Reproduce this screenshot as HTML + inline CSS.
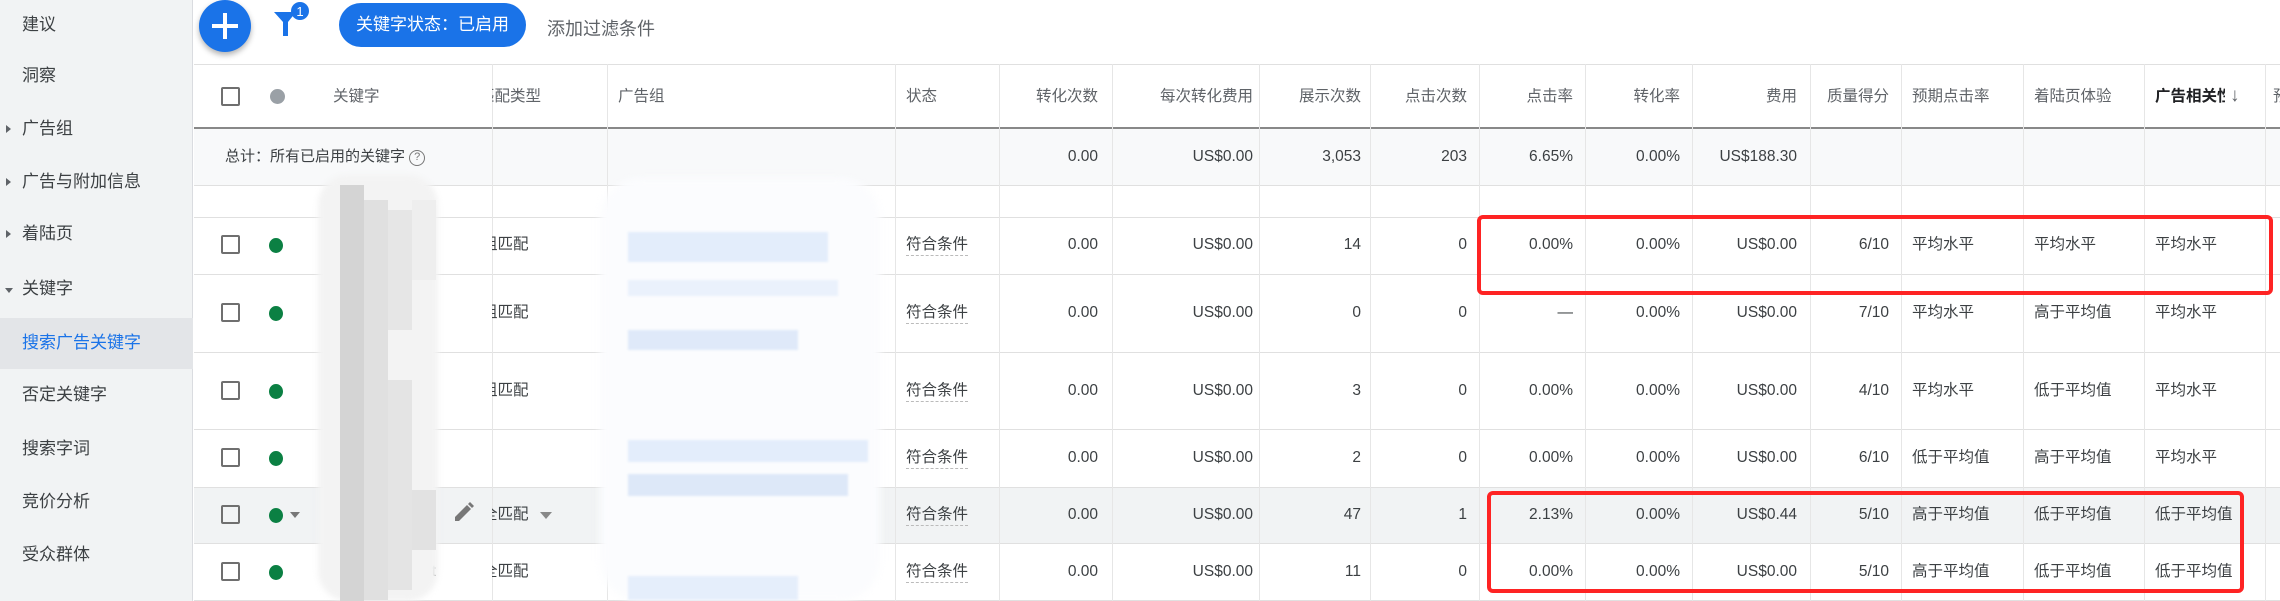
<!DOCTYPE html>
<html><head><meta charset="utf-8"><style>
*{margin:0;padding:0;box-sizing:border-box}
body{width:2280px;height:601px;overflow:hidden;background:#fff;font-family:"Liberation Sans","Noto Sans CJK SC",sans-serif;color:#3c4043;position:relative;font-size:15.5px}
.a{position:absolute;white-space:nowrap}
.side{position:absolute;left:0;top:0;width:193px;height:601px;background:#f1f3f4;border-right:1px solid #dadce0}
.si{position:absolute;left:22px;font-size:17px;color:#3c4043;line-height:20px;white-space:nowrap}
.tri{position:absolute;left:6px;width:0;height:0;border-top:4px solid transparent;border-bottom:4px solid transparent;border-left:5px solid #5f6368}
.trid{position:absolute;left:5px;width:0;height:0;border-left:4px solid transparent;border-right:4px solid transparent;border-top:5px solid #5f6368}
.hl{position:absolute;left:194px;right:0;height:1px;background:#e0e0e0}
.vl{position:absolute;width:1px;background:#e6e6e6;top:64px;height:537px}
.r{position:absolute;text-align:right;width:120px;line-height:20px;white-space:nowrap}
.l{position:absolute;line-height:20px;white-space:nowrap}
.hd{color:#5f6368}
.cb{position:absolute;left:221px;width:19px;height:19px;border:2px solid #6f6f6f;border-radius:2px}
.dot{position:absolute;left:269px;width:14px;height:15px;border-radius:50%;background:#0b8043}
.st{border-bottom:1px dashed #bbb}
.red{position:absolute;border:4px solid #fe2323;border-radius:6px}
.px{position:absolute;width:24px;height:24px}
</style></head><body>
<div class="side">
<div class="si" style="top:15px">建议</div>
<div class="si" style="top:66px">洞察</div>
<div class="tri" style="top:125px"></div><div class="si" style="top:119px">广告组</div>
<div class="tri" style="top:178px"></div><div class="si" style="top:172px">广告与附加信息</div>
<div class="tri" style="top:230px"></div><div class="si" style="top:224px">着陆页</div>
<div class="trid" style="top:288px"></div><div class="si" style="top:279px">关键字</div>
<div style="position:absolute;left:0;top:318px;width:193px;height:51px;background:#e3e5e8"></div>
<div class="si" style="top:333px;color:#1a73e8">搜索广告关键字</div>
<div class="si" style="top:385px">否定关键字</div>
<div class="si" style="top:439px">搜索字词</div>
<div class="si" style="top:492px">竞价分析</div>
<div class="si" style="top:545px">受众群体</div>
</div>
<!-- top bar -->
<div class="a" style="left:199px;top:0;width:52px;height:52px;border-radius:50%;background:#1a73e8;box-shadow:0 3px 6px rgba(0,0,0,.3)"></div>
<div class="a" style="left:212px;top:24px;width:26px;height:4px;background:#fff"></div>
<div class="a" style="left:223px;top:13px;width:4px;height:26px;background:#fff"></div>
<svg class="a" style="left:272px;top:2px" width="40" height="36"><path d="M2 10 H24 L16 20 V34 H11 V20 Z" fill="#1a73e8"/><circle cx="28" cy="9" r="9" fill="#1a73e8"/><text x="28" y="14" font-size="13" fill="#fff" text-anchor="middle" font-family="Liberation Sans">1</text></svg>
<div class="a" style="left:339px;top:3px;width:187px;height:44px;border-radius:22px;background:#1a73e8;color:#fff;font-size:17px;line-height:44px;text-align:center">关键字状态：已启用</div>
<div class="a" style="left:547px;top:15px;font-size:18px;color:#5f6368">添加过滤条件</div>
<div class="hl" style="top:64px"></div>
<!-- table backgrounds -->
<div class="a" style="left:194px;top:129px;right:0;height:56px;background:#f8f9fa"></div>
<div class="a" style="left:194px;top:487px;right:0;height:56px;background:#f1f3f4"></div>
<div class="a" style="left:194px;top:127px;right:0;height:2px;background:#888"></div>
<div class="hl" style="top:185px"></div><div class="hl" style="top:217px"></div><div class="hl" style="top:274px"></div><div class="hl" style="top:352px"></div><div class="hl" style="top:429px"></div><div class="hl" style="top:487px"></div><div class="hl" style="top:543px"></div><div class="hl" style="top:600px"></div>
<div class="vl" style="left:492px"></div><div class="vl" style="left:607px"></div><div class="vl" style="left:895px"></div><div class="vl" style="left:999px"></div><div class="vl" style="left:1112px"></div><div class="vl" style="left:1259px"></div><div class="vl" style="left:1370px"></div><div class="vl" style="left:1479px"></div><div class="vl" style="left:1585px"></div><div class="vl" style="left:1692px"></div><div class="vl" style="left:1810px"></div><div class="vl" style="left:1901px"></div><div class="vl" style="left:2023px"></div><div class="vl" style="left:2144px"></div><div class="vl" style="left:2265px"></div>
<!-- header -->
<div class="cb" style="top:87px"></div>
<div class="a" style="left:270px;top:89px;width:15px;height:15px;border-radius:50%;background:#9aa0a6"></div>
<div class="l hd" style="left:333px;top:87px">关键字</div>
<div class="l hd" style="left:492px;top:87px;width:110px;overflow:hidden"><span style="margin-left:-13px">匹配类型</span></div>
<div class="l hd" style="left:618px;top:87px">广告组</div>
<div class="l hd" style="left:906px;top:87px">状态</div>
<div class="r hd" style="left:978px;top:87px">转化次数</div>
<div class="r hd" style="left:1133px;top:87px">每次转化费用</div>
<div class="r hd" style="left:1241px;top:87px">展示次数</div>
<div class="r hd" style="left:1347px;top:87px">点击次数</div>
<div class="r hd" style="left:1453px;top:87px">点击率</div>
<div class="r hd" style="left:1560px;top:87px">转化率</div>
<div class="r hd" style="left:1677px;top:87px">费用</div>
<div class="r hd" style="left:1769px;top:87px">质量得分</div>
<div class="l hd" style="left:1912px;top:87px">预期点击率</div>
<div class="l hd" style="left:2034px;top:87px">着陆页体验</div>
<div class="l" style="left:2155px;top:87px;width:70px;overflow:hidden;color:#202124;font-weight:bold">广告相关性</div>
<div class="l hd" style="left:2230px;top:86px;font-size:19px">↓</div>
<div class="l hd" style="left:2273px;top:87px">预</div>
<!-- total -->
<div class="l" style="left:225px;top:147px;font-size:15px">总计：所有已启用的关键字 <span style="display:inline-block;width:16px;height:16px;border:1.5px solid #777;border-radius:50%;font-size:11px;text-align:center;line-height:13px;color:#777;vertical-align:1px">?</span></div>
<div class="r" style="left:978px;top:147px">0.00</div>
<div class="r" style="left:1133px;top:147px">US$0.00</div>
<div class="r" style="left:1241px;top:147px">3,053</div>
<div class="r" style="left:1347px;top:147px">203</div>
<div class="r" style="left:1453px;top:147px">6.65%</div>
<div class="r" style="left:1560px;top:147px">0.00%</div>
<div class="r" style="left:1677px;top:147px">US$188.30</div>
<!-- rows -->
<div class="cb" style="top:235px"></div><div class="dot" style="top:238px"></div>
<div class="cb" style="top:303px"></div><div class="dot" style="top:306px"></div>
<div class="cb" style="top:381px"></div><div class="dot" style="top:384px"></div>
<div class="cb" style="top:448px"></div><div class="dot" style="top:451px"></div>
<div class="cb" style="top:505px"></div><div class="dot" style="top:508px"></div>
<div class="cb" style="top:562px"></div><div class="dot" style="top:565px"></div>
<div class="a" style="left:290px;top:512px;border-left:5px solid transparent;border-right:5px solid transparent;border-top:6px solid #777"></div>
<svg class="a" style="left:452px;top:500px" width="24" height="24"><path d="M3 21 L3 17 L15 5 L19 9 L7 21 Z M16 4 L18 2 L22 6 L20 8 Z" fill="#777"/></svg>
<div class="a" style="left:540px;top:512px;border-left:6px solid transparent;border-right:6px solid transparent;border-top:7px solid #888"></div>
<div class="l" style="left:492px;top:235px;width:100px;overflow:hidden"><span style="margin-left:-10px">组匹配</span></div>
<div class="l" style="left:492px;top:303px;width:100px;overflow:hidden"><span style="margin-left:-10px">组匹配</span></div>
<div class="l" style="left:492px;top:381px;width:100px;overflow:hidden"><span style="margin-left:-10px">组匹配</span></div>
<div class="l" style="left:492px;top:505px;width:100px;overflow:hidden"><span style="margin-left:-10px">全匹配</span></div>
<div class="l" style="left:492px;top:562px;width:100px;overflow:hidden"><span style="margin-left:-10px">全匹配</span></div>
<div class="l" style="left:424px;top:562px">st</div>
<!-- blur blobs -->
<div class="a" style="left:318px;top:175px;width:120px;height:426px;background:#f3f3f3;filter:blur(3px);border-radius:30px"></div>
<div class="a" style="left:340px;top:185px;width:24px;height:416px;background:#d4d4d4"></div>
<div class="a" style="left:364px;top:200px;width:24px;height:400px;background:#e0e0e0"></div>
<div class="a" style="left:388px;top:210px;width:24px;height:120px;background:#e6e6e6"></div>
<div class="a" style="left:388px;top:380px;width:24px;height:210px;background:#e4e4e4"></div>
<div class="a" style="left:412px;top:200px;width:24px;height:80px;background:#eeeeee"></div>
<div class="a" style="left:412px;top:490px;width:24px;height:60px;background:#e2e2e2"></div>
<div class="a" style="left:600px;top:178px;width:280px;height:423px;background:#fbfcfe;filter:blur(4px);border-radius:40px"></div>
<div class="a" style="left:628px;top:232px;width:200px;height:30px;background:#e3edfb;filter:blur(1px)"></div>
<div class="a" style="left:628px;top:280px;width:210px;height:16px;background:#eaf1fc;filter:blur(1px)"></div>
<div class="a" style="left:628px;top:330px;width:170px;height:20px;background:#dfe9f9;filter:blur(1px)"></div>
<div class="a" style="left:628px;top:440px;width:240px;height:22px;background:#e3edfb;filter:blur(1px)"></div>
<div class="a" style="left:628px;top:474px;width:220px;height:22px;background:#dde8f8;filter:blur(1px)"></div>
<div class="a" style="left:628px;top:576px;width:170px;height:24px;background:#e5eefb;filter:blur(1px)"></div>
<!-- status -->
<div class="l st" style="left:906px;top:235px">符合条件</div>
<div class="l st" style="left:906px;top:303px">符合条件</div>
<div class="l st" style="left:906px;top:381px">符合条件</div>
<div class="l st" style="left:906px;top:448px">符合条件</div>
<div class="l st" style="left:906px;top:505px">符合条件</div>
<div class="l st" style="left:906px;top:562px">符合条件</div>
<!-- numeric rows -->
<div style="position:absolute;left:0;top:235px;width:2280px;height:20px">
<div class="r" style="left:978px">0.00</div><div class="r" style="left:1133px">US$0.00</div><div class="r" style="left:1241px">14</div><div class="r" style="left:1347px">0</div><div class="r" style="left:1453px">0.00%</div><div class="r" style="left:1560px">0.00%</div><div class="r" style="left:1677px">US$0.00</div><div class="r" style="left:1769px">6/10</div><div class="l" style="left:1912px">平均水平</div><div class="l" style="left:2034px">平均水平</div><div class="l" style="left:2155px">平均水平</div></div>
<div style="position:absolute;left:0;top:303px;width:2280px;height:20px">
<div class="r" style="left:978px">0.00</div><div class="r" style="left:1133px">US$0.00</div><div class="r" style="left:1241px">0</div><div class="r" style="left:1347px">0</div><div class="r" style="left:1453px">—</div><div class="r" style="left:1560px">0.00%</div><div class="r" style="left:1677px">US$0.00</div><div class="r" style="left:1769px">7/10</div><div class="l" style="left:1912px">平均水平</div><div class="l" style="left:2034px">高于平均值</div><div class="l" style="left:2155px">平均水平</div></div>
<div style="position:absolute;left:0;top:381px;width:2280px;height:20px">
<div class="r" style="left:978px">0.00</div><div class="r" style="left:1133px">US$0.00</div><div class="r" style="left:1241px">3</div><div class="r" style="left:1347px">0</div><div class="r" style="left:1453px">0.00%</div><div class="r" style="left:1560px">0.00%</div><div class="r" style="left:1677px">US$0.00</div><div class="r" style="left:1769px">4/10</div><div class="l" style="left:1912px">平均水平</div><div class="l" style="left:2034px">低于平均值</div><div class="l" style="left:2155px">平均水平</div></div>
<div style="position:absolute;left:0;top:448px;width:2280px;height:20px">
<div class="r" style="left:978px">0.00</div><div class="r" style="left:1133px">US$0.00</div><div class="r" style="left:1241px">2</div><div class="r" style="left:1347px">0</div><div class="r" style="left:1453px">0.00%</div><div class="r" style="left:1560px">0.00%</div><div class="r" style="left:1677px">US$0.00</div><div class="r" style="left:1769px">6/10</div><div class="l" style="left:1912px">低于平均值</div><div class="l" style="left:2034px">高于平均值</div><div class="l" style="left:2155px">平均水平</div></div>
<div style="position:absolute;left:0;top:505px;width:2280px;height:20px">
<div class="r" style="left:978px">0.00</div><div class="r" style="left:1133px">US$0.00</div><div class="r" style="left:1241px">47</div><div class="r" style="left:1347px">1</div><div class="r" style="left:1453px">2.13%</div><div class="r" style="left:1560px">0.00%</div><div class="r" style="left:1677px">US$0.44</div><div class="r" style="left:1769px">5/10</div><div class="l" style="left:1912px">高于平均值</div><div class="l" style="left:2034px">低于平均值</div><div class="l" style="left:2155px">低于平均值</div></div>
<div style="position:absolute;left:0;top:562px;width:2280px;height:20px">
<div class="r" style="left:978px">0.00</div><div class="r" style="left:1133px">US$0.00</div><div class="r" style="left:1241px">11</div><div class="r" style="left:1347px">0</div><div class="r" style="left:1453px">0.00%</div><div class="r" style="left:1560px">0.00%</div><div class="r" style="left:1677px">US$0.00</div><div class="r" style="left:1769px">5/10</div><div class="l" style="left:1912px">高于平均值</div><div class="l" style="left:2034px">低于平均值</div><div class="l" style="left:2155px">低于平均值</div></div>
<!-- red boxes -->
<div class="red" style="left:1477px;top:215px;width:796px;height:80px"></div>
<div class="red" style="left:1487px;top:491px;width:757px;height:102px"></div>
</body></html>
